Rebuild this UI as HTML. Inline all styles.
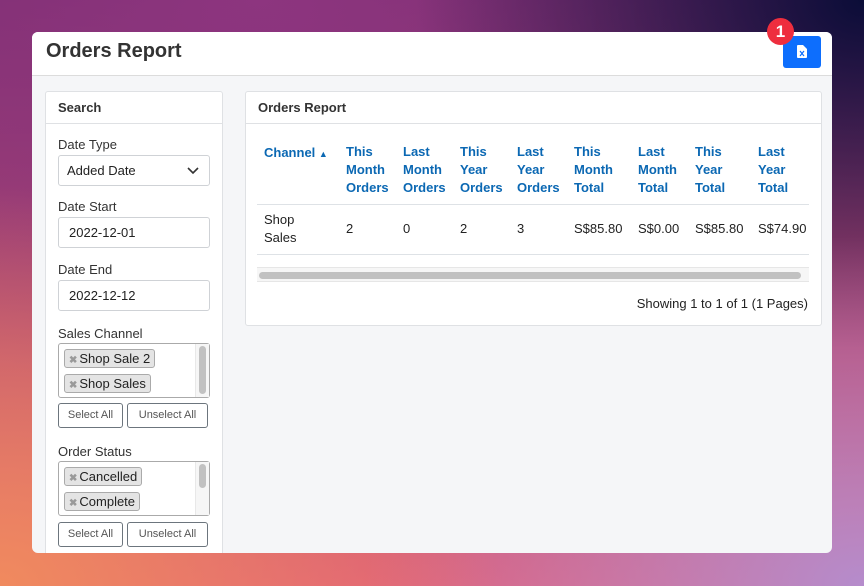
<!DOCTYPE html>
<html><head><style>
*{box-sizing:border-box;margin:0;padding:0}
body{width:864px;height:586px;overflow:hidden;position:relative;font-family:"Liberation Sans",sans-serif;color:#222;
background:
radial-gradient(ellipse 500px 400px at 0% 100%,#f08a5e 0%,rgba(240,138,94,0) 100%),
radial-gradient(ellipse 500px 350px at 100% 100%,#b58ccc 0%,rgba(181,140,204,0) 100%),
radial-gradient(ellipse 450px 350px at 100% 0%,#0b0d38 0%,rgba(11,13,56,0) 100%),
radial-gradient(ellipse 600px 400px at 30% 0%,#8d357f 0%,rgba(141,53,127,0) 100%),
linear-gradient(180deg,#7a2d6e,#e0607a);}
.a{position:absolute}
.card{left:32px;top:32px;width:800px;height:521px;background:#f5f6f8;border-radius:6px;overflow:hidden}
.hdr{left:0;top:0;width:800px;height:44px;background:#fff;border-bottom:1px solid #dcdcdc}
.panel{background:#fff;border:1px solid #dfe1e4;border-radius:3px}
.ph{font-size:13px;color:#333;font-weight:bold}
.lbl{font-size:13px;color:#333}
.inp{border:1px solid #cfd2d6;border-radius:3px;background:#fff;font-size:13px;color:#222;padding-left:10px;line-height:30px;height:31px}
.tag{background:#e4e4e4;border:1px solid #aaa;border-radius:3px;font-size:13px;height:19px;line-height:17px;padding:0 4px 0 4px;color:#222}
.tag b{color:#999;font-size:10px;margin-right:2px}
.btn{border:1px solid #6c757d;border-radius:3px;font-size:11px;color:#555;text-align:center;line-height:23px;height:25px;background:#fff}
.th{font-size:13px;color:#0b68b3;font-weight:bold;line-height:18px}
.td{font-size:13px;color:#222;line-height:18px}
</style></head><body>
<div class="a card">
 <div class="a hdr"><div class="a" style="left:14px;top:8px;font-size:20px;font-weight:bold;color:#333">Orders Report</div></div>
 <div class="a" style="left:751px;top:4px;width:38px;height:32px;background:#0d6efd;border-radius:3px">
  <svg class="a" style="left:14px;top:9px" width="10" height="13" viewBox="0 0 10 13"><path d="M0 1a1 1 0 0 1 1-1h5l4 4v8a1 1 0 0 1-1 1H1a1 1 0 0 1-1-1z" fill="#fff"/><path d="M3 6l4 5M7 6l-4 5" stroke="#0d6efd" stroke-width="1.2"/></svg>
 </div>
 <!-- search -->
 <div class="a panel" style="left:13px;top:59px;width:178px;height:480px">
  <div class="a ph" style="left:0;top:0;width:176px;height:32px;border-bottom:1px solid #dfe1e4;padding:8px 12px">Search</div>
  <div class="a lbl" style="left:12px;top:45px">Date Type</div>
  <div class="a inp" style="left:12px;top:63px;width:152px;padding-left:8px">Added Date<svg class="a" style="left:128px;top:11px" width="12" height="8" viewBox="0 0 12 8"><path d="M1 1l5 5 5-5" stroke="#333" stroke-width="1.6" fill="none"/></svg></div>
  <div class="a lbl" style="left:12px;top:107px">Date Start</div>
  <div class="a inp" style="left:12px;top:125px;width:152px">2022-12-01</div>
  <div class="a lbl" style="left:12px;top:170px">Date End</div>
  <div class="a inp" style="left:12px;top:188px;width:152px">2022-12-12</div>
  <div class="a lbl" style="left:12px;top:234px">Sales Channel</div>
  <div class="a" style="left:12px;top:251px;width:152px;height:55px;border:1px solid #aaa;border-radius:3px">
   <div class="a tag" style="left:5px;top:5px"><b>✖</b>Shop Sale 2</div>
   <div class="a tag" style="left:5px;top:30px"><b>✖</b>Shop Sales</div>
   <div class="a" style="left:136px;top:0;width:14px;height:53px;background:#f6f6f6;border-left:1px solid #e8e8e8"><div class="a" style="left:3px;top:2px;width:7px;height:48px;background:#c1c1c1;border-radius:4px"></div></div>
  </div>
  <div class="a btn" style="left:12px;top:311px;width:65px">Select All</div>
  <div class="a btn" style="left:81px;top:311px;width:81px">Unselect All</div>
  <div class="a lbl" style="left:12px;top:352px">Order Status</div>
  <div class="a" style="left:12px;top:369px;width:152px;height:55px;border:1px solid #aaa;border-radius:3px">
   <div class="a tag" style="left:5px;top:5px"><b>✖</b>Cancelled</div>
   <div class="a tag" style="left:5px;top:30px"><b>✖</b>Complete</div>
   <div class="a" style="left:136px;top:0;width:14px;height:53px;background:#f6f6f6;border-left:1px solid #e8e8e8"><div class="a" style="left:3px;top:2px;width:7px;height:24px;background:#c1c1c1;border-radius:4px"></div></div>
  </div>
  <div class="a btn" style="left:12px;top:430px;width:65px">Select All</div>
  <div class="a btn" style="left:81px;top:430px;width:81px">Unselect All</div>
 </div>
 <!-- report -->
 <div class="a panel" style="left:213px;top:59px;width:577px;height:235px">
  <div class="a ph" style="left:0;top:0;width:575px;height:32px;border-bottom:1px solid #dfe1e4;padding:8px 12px">Orders Report</div>
  <div class="a th" style="left:18px;top:52px">Channel <span style="font-size:9px">▲</span></div>
  <div class="a th" style="left:100px;top:51px">This<br>Month<br>Orders</div>
  <div class="a th" style="left:157px;top:51px">Last<br>Month<br>Orders</div>
  <div class="a th" style="left:214px;top:51px">This<br>Year<br>Orders</div>
  <div class="a th" style="left:271px;top:51px">Last<br>Year<br>Orders</div>
  <div class="a th" style="left:328px;top:51px">This<br>Month<br>Total</div>
  <div class="a th" style="left:392px;top:51px">Last<br>Month<br>Total</div>
  <div class="a th" style="left:449px;top:51px">This<br>Year<br>Total</div>
  <div class="a th" style="left:512px;top:51px">Last<br>Year<br>Total</div>
  <div class="a" style="left:11px;top:112px;width:552px;border-top:1px solid #dee2e6"></div>
  <div class="a td" style="left:18px;top:119px">Shop<br>Sales</div>
  <div class="a td" style="left:100px;top:128px">2</div>
  <div class="a td" style="left:157px;top:128px">0</div>
  <div class="a td" style="left:214px;top:128px">2</div>
  <div class="a td" style="left:271px;top:128px">3</div>
  <div class="a td" style="left:328px;top:128px">S$85.80</div>
  <div class="a td" style="left:392px;top:128px">S$0.00</div>
  <div class="a td" style="left:449px;top:128px">S$85.80</div>
  <div class="a td" style="left:512px;top:128px">S$74.90</div>
  <div class="a" style="left:11px;top:162px;width:552px;border-top:1px solid #dee2e6"></div>
  <div class="a" style="left:11px;top:175px;width:552px;height:15px;background:#f6f6f6;border-top:1px solid #e6e6e6;border-bottom:1px solid #e6e6e6"><div class="a" style="left:2px;top:4px;width:542px;height:7px;background:#c1c1c1;border-radius:4px"></div></div>
  <div class="a td" style="right:13px;top:203px">Showing 1 to 1 of 1 (1 Pages)</div>
 </div>
</div>
<div class="a" style="left:767px;top:18px;width:27px;height:27px;border-radius:50%;background:#ee2e3e;color:#fff;font-weight:bold;font-size:17px;text-align:center;line-height:27px">1</div>
</body></html>
